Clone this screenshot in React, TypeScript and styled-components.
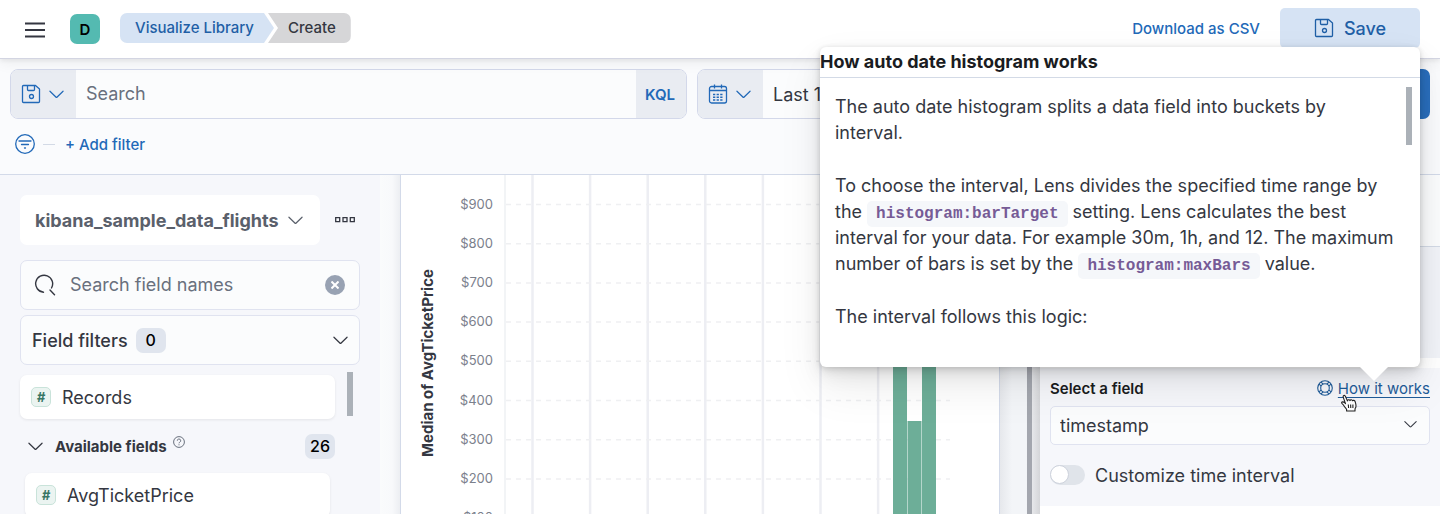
import React from 'react';
import styled, { createGlobalStyle } from 'styled-components';

const Global = createGlobalStyle`
  *, *::before, *::after { box-sizing: border-box; }
  body {
    margin: 0;
    background: #fff;
    color: #343741;
    font-family: Inter, "Liberation Sans", sans-serif;
    font-size: 18px;
  }
  button, input, select { font: inherit; color: inherit; }
  button { border: 0; padding: 0; background: none; cursor: pointer; }
  svg { display: block; flex: none; }
`;

const Shell = styled.div`
  position: relative;
  display: flex;
  flex-direction: column;
  height: 100vh;
  margin-right: 12px;
  overflow: hidden;
`;

/* ---------- header ---------- */

const Header = styled.header`
  position: relative;
  z-index: 1;
  flex: none;
  display: flex;
  align-items: center;
  height: 59px;
  padding: 0 20px 2px 25px;
  background: #fff;
  border-bottom: 1px solid #d3d5e2;
  box-shadow: 0 2px 4px rgba(0, 0, 0, 0.06), 0 5px 12px rgba(0, 0, 0, 0.05);
`;

const MenuButton = styled.button`
  color: #343741;
  padding-top: 3px;
`;

const Avatar = styled.div`
  display: flex;
  align-items: center;
  justify-content: center;
  width: 30px;
  height: 30px;
  margin: 2px 20px 0 25px;
  border-radius: 7px;
  background: #54bab1;
  color: #000;
  font-size: 15px;
  font-weight: 600;
`;

const Crumbs = styled.nav`
  display: flex;
  flex: 1;
  font-size: 15px;
  font-weight: 500;
  line-height: 30px;
`;

const CrumbLink = styled.a`
  padding: 0 20px 0 15px;
  border-radius: 7px 0 0 7px;
  background: #d6e3f4;
  color: #1f5fa6;
  text-decoration: none;
  clip-path: polygon(0 0, calc(100% - 10px) 0, 100% 50%, calc(100% - 10px) 100%, 0 100%);
`;

const CrumbCurrent = styled.span`
  margin-left: -6px;
  padding: 0 15px 0 20px;
  border-radius: 0 7px 7px 0;
  background: #d6d6d8;
  clip-path: polygon(0 0, 100% 0, 100% 100%, 0 100%, 10px 50%);
`;

const TextButton = styled.button`
  color: #2269b8;
  font-size: 15px;
  font-weight: 500;
`;

const SaveButton = styled.button`
  display: flex;
  align-items: center;
  justify-content: center;
  gap: 10px;
  width: 140px;
  height: 40px;
  margin-left: 20px;
  border-radius: 5px;
  background: #d6e3f4;
  color: #1f5fa6;
  font-weight: 500;
`;

/* ---------- query bar ---------- */

const QueryBar = styled.section`
  flex: none;
  height: 116px;
  padding: 10px 10px 0;
  background: #fafbfd;
  border-bottom: 1px solid #d3dae9;
`;

const QueryRow = styled.div`
  display: grid;
  grid-template-columns: minmax(0, 677fr) minmax(0, 733fr);
  gap: 10px;
`;

const ControlGroup = styled.div`
  display: flex;
  flex: 1;
  height: 50px;
  overflow: hidden;
  border: 1px solid #d3d8ea;
  border-radius: 8px;
  background: #fbfcfd;
`;

const Addon = styled.button<{ $width: number }>`
  display: flex;
  align-items: center;
  justify-content: center;
  gap: 8px;
  flex: none;
  width: ${(p) => p.$width}px;
  padding-right: 2px;
  background: #e9ecf2;
  color: #2269b8;
  font-size: 15px;
  font-weight: 600;
`;

const PlainInput = styled.input`
  flex: 1;
  min-width: 0;
  padding: 0 10px 2px;
  border: 0;
  outline: 0;
  background: transparent;
  &::placeholder { color: #69707d; opacity: 1; }
`;

const DateValue = styled.button`
  flex: 1;
  padding-left: 10px;
  text-align: left;
`;

const DateRow = styled.div`
  display: flex;
  gap: 10px;
`;

const UpdateButton = styled.button`
  width: 130px;
  border-radius: 7px;
  background: #2a6fbd;
`;

const FilterRow = styled.div`
  display: flex;
  align-items: center;
  gap: 8px;
  height: 50px;
  padding-left: 5px;
  color: #2269b8;
`;

const FilterDash = styled.span`
  width: 12px;
  height: 1px;
  margin-right: 2px;
  background: #d3dae6;
`;

/* ---------- workspace ---------- */

const Workspace = styled.main`
  flex: 1;
  min-height: 0;
  display: flex;
  overflow: hidden;
`;

const FieldPanel = styled.aside`
  flex: none;
  width: 380px;
  padding: 20px 20px 0;
  background: #f6f7fb;
`;

const DataViewRow = styled.div`
  display: flex;
  align-items: center;
  gap: 15px;
`;

const DataViewButton = styled.button`
  display: flex;
  align-items: center;
  justify-content: space-between;
  width: 300px;
  height: 50px;
  padding: 0 17px 0 15px;
  border-radius: 7px;
  background: #fff;
  color: #5a606b;
  font-weight: 700;
`;

const FieldBox = styled.div`
  display: flex;
  align-items: center;
  gap: 4px;
  height: 50px;
  margin-top: 15px;
  padding: 0 14px 0 13px;
  border: 1px solid #e0e3f0;
  border-radius: 7px;
  background: #fbfcfd;
`;

const ClearButton = styled.button`
  display: flex;
  align-items: center;
  justify-content: center;
  width: 20px;
  height: 20px;
  border-radius: 50%;
  background: #98a2b3;
  color: #fff;
`;

const FilterToggle = styled.button`
  display: flex;
  align-items: center;
  gap: 8px;
  width: 100%;
  height: 50px;
  margin-top: 5px;
  padding: 0 11px;
  border: 1px solid #e0e3f0;
  border-radius: 7px;
  background: #fbfcfd;
  font-weight: 500;
`;

const Badge = styled.span`
  width: 30px;
  border-radius: 7px;
  background: #e0e5ee;
  color: #000;
  font-size: 16px;
  font-weight: 500;
  line-height: 25px;
  text-align: center;
`;

const Spacer = styled.span`
  flex: 1;
`;

const FieldScroll = styled.div`
  display: flex;
  justify-content: space-between;
  margin: 7px 7px 0 0;
`;

const FieldList = styled.div`
  width: 315px;
  padding-top: 3px;
`;

const Thumb = styled.div<{ $height: number }>`
  width: 6px;
  height: ${(p) => p.$height}px;
  background: #abb1b8;
`;

const FieldCard = styled.button<{ $nested?: boolean }>`
  display: flex;
  align-items: center;
  gap: 11px;
  width: ${(p) => (p.$nested ? 305 : 315)}px;
  height: 44px;
  margin-left: ${(p) => (p.$nested ? 5 : 0)}px;
  padding-left: 11px;
  border-radius: 7px;
  background: #fff;
  box-shadow: 0 1px 3px rgba(0, 0, 0, 0.08);
`;

const Token = styled.span`
  width: 20px;
  height: 20px;
  border: 1px solid #c9e3da;
  border-radius: 5px;
  background: #ebf4f1;
  color: #387765;
  font-size: 13px;
  font-style: italic;
  font-weight: 700;
  line-height: 18px;
  text-align: center;
`;

const GroupRow = styled.div`
  display: flex;
  align-items: center;
  height: 54px;
  padding-left: 8px;
`;

const GroupTitle = styled.h3`
  margin: 0 6px 0 12px;
  font-size: 15px;
  font-weight: 700;
`;

const HelpMark = styled.span`
  align-self: flex-start;
  padding-top: 17px;
  color: #69707d;
`;

const ChartGutter = styled.div`
  flex: none;
  width: 21px;
  background: linear-gradient(90deg, #fafbfc, #f8f9fb 60%, #eceef2);
  border-right: 1px solid #d3dae9;
`;

const ChartPanel = styled.section`
  flex: 1;
  min-width: 0;
  overflow: hidden;
  background: #fff;
`;

const Tick = styled.text`
  fill: #7b808c;
  font-size: 13px;
  text-anchor: end;
`;

const AxisTitle = styled.text`
  fill: #343741;
  font-size: 15px;
  font-weight: 700;
  text-anchor: middle;
`;

const ConfigGutter = styled.div`
  flex: none;
  display: flex;
  justify-content: flex-end;
  width: 41px;
  padding-right: 8px;
  border-left: 1px solid #d3dae9;
  background: linear-gradient(90deg, #e6e8ec, #f3f5f8 12px, #f3f5f8 26px, #e4e5e8 33px, #d4d5d8);
`;

const GutterBar = styled.div`
  width: 5px;
  background: #a3a6ae;
`;

const ConfigPanel = styled.aside`
  flex: none;
  width: 400px;
  background: #fff;
`;

const PanelHead = styled.div`
  height: 72px;
  background: #fbfcfd;
  border-bottom: 1px solid #d3dae6;
`;

const PanelFunctions = styled.div`
  height: 111px;
  margin-bottom: 10px;
  background: #f1f3f8;
`;

const PanelField = styled.div`
  height: 138px;
  padding: 10px 10px 0;
  background: #f6f7fb;
`;

const LabelRow = styled.div`
  display: flex;
  align-items: center;
  justify-content: space-between;
  height: 20px;
  font-size: 15px;
`;

const FieldLabel = styled.label`
  color: #1a1c21;
  font-weight: 600;
`;

const HelpLink = styled.a`
  position: relative;
  z-index: 1;
  display: flex;
  align-items: center;
  gap: 5px;
  color: #1f5c99;
  text-decoration: none;
  span { text-decoration: underline; text-underline-offset: 3px; }
`;

const Pointer = styled.svg`
  position: absolute;
  left: 24px;
  top: 15px;
`;

const SelectWrap = styled.div`
  position: relative;
  margin-top: 8px;
  svg { position: absolute; right: 13px; top: 12px; pointer-events: none; }
`;

const Select = styled.select`
  appearance: none;
  width: 100%;
  height: 39px;
  padding: 0 9px;
  border: 1px solid #e0e3f0;
  border-radius: 5px;
  background: #fbfcfd;
`;

const SwitchLabel = styled.label`
  display: flex;
  align-items: center;
  gap: 10px;
  height: 22px;
  margin-top: 19px;
`;

const Switch = styled.input`
  appearance: none;
  width: 35px;
  height: 20px;
  margin: 0;
  border-radius: 10px;
  background: #e0e4ea;
  &::before {
    content: '';
    display: block;
    width: 19px;
    height: 19px;
    border: 1px solid #cdd2dc;
    border-radius: 50%;
    background: #fff;
  }
`;

/* ---------- popover ---------- */

const Popover = styled.div`
  position: absolute;
  z-index: 2;
  top: 47px;
  right: 20px;
  width: 600px;
  height: 320px;
  border-radius: 6px;
  background: #fff;
  box-shadow: 0 1px 5px rgba(0, 0, 0, 0.12), 0 4px 10px rgba(0, 0, 0, 0.08),
    0 8px 20px rgba(0, 0, 0, 0.08), 0 20px 45px rgba(0, 0, 0, 0.08);
  &::after {
    content: '';
    position: absolute;
    top: 100%;
    right: 32px;
    border: 14px solid transparent;
    border-top-color: #fff;
    border-bottom: 0;
  }
`;

const PopoverTitle = styled.h2`
  margin: 0;
  border-bottom: 1px solid #d3dae6;
  color: #1a1c21;
  font-size: 18px;
  font-weight: 700;
  line-height: 30px;
`;

const PopoverBody = styled.div`
  display: flex;
  justify-content: space-between;
  padding: 9px 8px 0 15px;
`;

const PopoverText = styled.div`
  width: 562px;
  padding-top: 7px;
  line-height: 26px;
  p { margin: 0 0 27px; }
`;

const Code = styled.code`
  padding: 4px 9px;
  border-radius: 5px;
  background: #f5f7fa;
  color: #765b96;
  font-family: "Liberation Mono", monospace;
  font-size: 16px;
  font-weight: 700;
  line-height: 18px;
`;

const Chevron = ({ w = 15 }: { w?: number }) => (
  <svg width={w} height={w} viewBox="0 0 16 16" fill="none" stroke="currentColor" strokeWidth="1.3" strokeLinecap="round">
    <path d="M1 4.5l6.3 6.2a1 1 0 001.4 0L15 4.5" />
  </svg>
);

const SaveIcon = () => (
  <svg width="20" height="20" viewBox="0 0 20 20" fill="none" stroke="currentColor" strokeWidth="1.3" strokeLinejoin="round">
    <path d="M2.5 1.5h12l4 3.5v12.5a1 1 0 01-1 1h-15a1 1 0 01-1-1v-15a1 1 0 011-1z" />
    <path d="M6.5 1.5v4a1 1 0 001 1h5a1 1 0 001-1v-4" />
    <circle cx="10.500" cy="12.5" r="2" />
  </svg>
);

const CalendarIcon = () => (
  <svg width="20" height="20" viewBox="0 0 20 20" fill="none" stroke="currentColor" strokeWidth="1.3">
    <rect x="1.5" y="2.5" width="17" height="16.5" rx="2" />
    <path d="M1.5 6.5h17M6.5 .5V4.5M13.5 .5V4.5" />
    <path d="M5 10.5h10M5 13.2h10M5 16h10" strokeWidth="1.5" strokeDasharray="2.3 1.3" />
  </svg>
);

const LifeRing = () => (
  <svg width="16" height="16" viewBox="0 0 16 16" fill="none" stroke="currentColor" strokeWidth="1.1">
    <circle cx="8" cy="8" r="7.3" />
    <circle cx="8" cy="8" r="4.3" />
    {[45, 135, 225, 315].map((a) => (
      <path key={a} d="M12 6.6h3M12 9.4h3" transform={`rotate(${a} 8 8)`} />
    ))}
  </svg>
);

const ticks = [900, 800, 700, 600, 500, 400, 300, 200, 100];
const tickY = (i: number) => 29.5 + i * 39.2;
const columns = [0, 1, 2, 3, 4, 5, 6];

const Chart = () => (
  <svg width="598" height="400" role="img" aria-label="Median of AvgTicketPrice">
    <line x1="104" x2="104" y1="0" y2="400" stroke="#eef0f3" strokeWidth="1.5" />
    {columns.map((c) => (
      <line key={c} x1={131.5 + c * 57.6} x2={131.5 + c * 57.6} y1="0" y2="400" stroke="#edeef3" strokeWidth="2.5" />
    ))}
    {ticks.map((t, i) => (
      <g key={t}>
        <line x1="105" x2="549" y1={tickY(i)} y2={tickY(i)} stroke="#eff0f2" strokeWidth="1.5" strokeDasharray="5 5" />
        <Tick x="92" y={tickY(i) + 4}>${t}</Tick>
      </g>
    ))}
    <rect x="492" y="150" width="14" height="250" fill="#6dae98" />
    <rect x="506.5" y="246" width="14" height="154" fill="#6dae98" />
    <rect x="521" y="150" width="14" height="250" fill="#6dae98" />
    <AxisTitle transform="translate(32 188) rotate(-90)">Median of AvgTicketPrice</AxisTitle>
  </svg>
);

export default function App() {
  return (
    <Shell>
      <Global />
      <Header>
        <MenuButton aria-label="Menu">
          <svg width="20" height="18" viewBox="0 0 20 18" stroke="currentColor" strokeWidth="2.2">
            <path d="M0 2.5h20M0 9h20M0 15.5h20" />
          </svg>
        </MenuButton>
        <Avatar>D</Avatar>
        <Crumbs>
          <CrumbLink href="#library">Visualize Library</CrumbLink>
          <CrumbCurrent>Create</CrumbCurrent>
        </Crumbs>
        <TextButton>Download as CSV</TextButton>
        <SaveButton><SaveIcon />Save</SaveButton>
      </Header>

      <QueryBar>
        <QueryRow>
          <ControlGroup>
            <Addon $width={65} aria-label="Saved queries"><SaveIcon /><Chevron /></Addon>
            <PlainInput placeholder="Search" aria-label="Search" />
            <Addon $width={50}>KQL</Addon>
          </ControlGroup>
          <DateRow>
            <ControlGroup>
              <Addon $width={65} aria-label="Quick dates"><CalendarIcon /><Chevron /></Addon>
              <DateValue>Last 1</DateValue>
            </ControlGroup>
            <UpdateButton aria-label="Update" />
          </DateRow>
        </QueryRow>
        <FilterRow>
          <svg width="20" height="20" viewBox="0 0 20 20" fill="none" stroke="currentColor" strokeWidth="1.3">
            <circle cx="10" cy="10" r="9.3" />
            <path d="M4 7h12M6.5 10.5h7M9.500 14h1" strokeLinecap="round" />
          </svg>
          <FilterDash />
          <TextButton>+ Add filter</TextButton>
        </FilterRow>
      </QueryBar>

      <Workspace>
        <FieldPanel>
          <DataViewRow>
            <DataViewButton>kibana_sample_data_flights<Chevron /></DataViewButton>
            <button aria-label="More options">
              <svg width="20" height="6" viewBox="0 0 20 6" fill="none" stroke="#343741" strokeWidth="1.3">
                <path d="M.7.7h4v4h-4zM8 .7h4v4H8zM15.3.7h4v4h-4z" />
              </svg>
            </button>
          </DataViewRow>
          <FieldBox>
            <svg width="22" height="22" viewBox="0 0 22 22" fill="none" stroke="#343741" strokeWidth="1.4" strokeLinecap="round">
              <path d="M9.5 18.2a8.5 8.5 0 1 1 8-4.2M16 16l4.500 4.800" />
            </svg>
            <PlainInput placeholder="Search field names" aria-label="Search field names" />
            <ClearButton aria-label="Clear">
              <svg width="8" height="8" viewBox="0 0 8 8" stroke="currentColor" strokeWidth="2"><path d="M.5.5l7 7M7.5.5l-7 7" /></svg>
            </ClearButton>
          </FieldBox>
          <FilterToggle>Field filters<Badge>0</Badge><Spacer /><Chevron /></FilterToggle>
          <FieldScroll>
            <FieldList>
              <FieldCard><Token>#</Token>Records</FieldCard>
              <GroupRow>
                <Chevron />
                <GroupTitle>Available fields</GroupTitle>
                <HelpMark>
                  <svg width="12" height="12" viewBox="0 0 12 12" fill="none" stroke="currentColor">
                    <circle cx="6" cy="6" r="5.4" />
                    <path d="M4.3 4.7a1.7 1.7 0 1 1 2.5 1.5c-.6.3-.8.5-.8 1.1M6 8.3v1" />
                  </svg>
                </HelpMark>
                <Spacer />
                <Badge>26</Badge>
              </GroupRow>
              <FieldCard $nested><Token>#</Token>AvgTicketPrice</FieldCard>
            </FieldList>
            <Thumb $height={44} />
          </FieldScroll>
        </FieldPanel>

        <ChartGutter />
        <ChartPanel><Chart /></ChartPanel>
        <ConfigGutter><GutterBar /></ConfigGutter>

        <ConfigPanel>
          <PanelHead />
          <PanelFunctions />
          <PanelField>
            <LabelRow>
              <FieldLabel htmlFor="field">Select a field</FieldLabel>
              <HelpLink href="#how">
                <LifeRing />
                <span>How it works</span>
                <Pointer width="16" height="18" viewBox="0 0 16 18" fill="#fff" stroke="#222" strokeWidth="1.1" strokeLinejoin="round">
                  <path d="M5.6 17v-1.6C4.8 14.2 3.6 13 2.6 11.3 1.9 10.2.5 9.5.6 8.6c.3-1 1.9-.9 2.9.1l1 .9L2.3 3.4C1.6 1.5 3.6.5 4.4 2.2l2 4.7c0-1.2 2.1-1.6 2.6-.3.2-1.1 2.2-1.1 2.6.2.4-.8 2.1-.5 2.5.7.5 1.5 1.2 3.5.8 5.3-.2 1.2-.9 1.5-.9 2.600V17z" />
                  <path d="M7.3 10.5l.3 3.5M9.6 10.5l.2 3.5M11.9 10.5v3.5" />
                </Pointer>
              </HelpLink>
            </LabelRow>
            <SelectWrap>
              <Select id="field" defaultValue="timestamp"><option>timestamp</option></Select>
              <Chevron w={13} />
            </SelectWrap>
            <SwitchLabel><Switch type="checkbox" />Customize time interval</SwitchLabel>
          </PanelField>
        </ConfigPanel>
      </Workspace>

      <Popover role="dialog" aria-labelledby="popover-title">
        <PopoverTitle id="popover-title">How auto date histogram works</PopoverTitle>
        <PopoverBody>
          <PopoverText>
            <p>The auto date histogram splits a data field into buckets by interval.</p>
            <p>
              To choose the interval, Lens divides the specified time range by
              the <Code>histogram:barTarget</Code> setting. Lens calculates the best interval for
              your data. For example 30m, 1h, and 12. The maximum number of bars is set by
              the <Code>histogram:maxBars</Code> value.
            </p>
            <p>The interval follows this logic:</p>
          </PopoverText>
          <Thumb $height={58} />
        </PopoverBody>
      </Popover>
    </Shell>
  );
}
